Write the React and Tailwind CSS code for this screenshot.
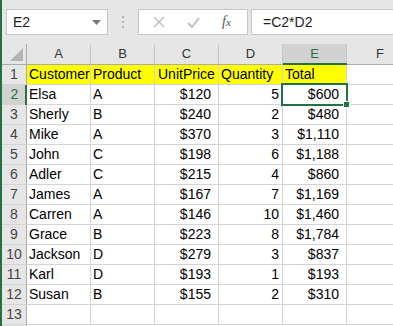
import React from "react";

const rows = [
  ["Elsa", "A", "$120", "5", "$600"],
  ["Sherly", "B", "$240", "2", "$480"],
  ["Mike", "A", "$370", "3", "$1,110"],
  ["John", "C", "$198", "6", "$1,188"],
  ["Adler", "C", "$215", "4", "$860"],
  ["James", "A", "$167", "7", "$1,169"],
  ["Carren", "A", "$146", "10", "$1,460"],
  ["Grace", "B", "$223", "8", "$1,784"],
  ["Jackson", "D", "$279", "3", "$837"],
  ["Karl", "D", "$193", "1", "$193"],
  ["Susan", "B", "$155", "2", "$310"],
];

const cols = ["A", "B", "C", "D", "E"];

function Toolbar() {
  return (
    <div className="h-[44px] flex items-start pt-[9px] pl-[4px] shrink-0">
      <div className="w-[102px] h-[26px] bg-white border border-[#c6c6c6] flex items-center justify-between pl-[6px] pr-[6px]">
        <span className="text-[14px] text-[#222]">E2</span>
        <svg width="9" height="5" viewBox="0 0 9 5">
          <path d="M0 0 H9 L4.5 5 Z" fill="#7a7a7a" />
        </svg>
      </div>
      <div className="w-[30px] h-[26px] flex flex-col items-center justify-center gap-[3px]">
        <div className="w-[2px] h-[2px] bg-[#b3b3b3]" />
        <div className="w-[2px] h-[2px] bg-[#b3b3b3]" />
        <div className="w-[2px] h-[2px] bg-[#b3b3b3]" />
      </div>
      <div className="w-[110px] h-[26px] bg-white border border-[#c6c6c6] flex items-center">
        <svg width="12" height="12" viewBox="0 0 12 12" className="ml-[14px]">
          <path d="M1 1 L11 11 M11 1 L1 11" stroke="#bdbdbd" strokeWidth="1.4" />
        </svg>
        <svg width="13" height="11" viewBox="0 0 13 11" className="ml-[22px]">
          <path d="M1 6 L5 10 L12 1" stroke="#bdbdbd" strokeWidth="1.8" fill="none" />
        </svg>
        <span
          className="ml-[22px] text-[14px] italic text-[#555] leading-none"
          style={{ fontFamily: '"Liberation Serif", serif' }}
        >
          f<span className="text-[11px]">x</span>
        </span>
      </div>
      <div className="ml-[3px] flex-1 h-[26px] bg-white border-y border-l border-[#c6c6c6] flex items-center pl-[11px]">
        <span className="text-[14px] text-[#222]">=C2*D2</span>
      </div>
    </div>
  );
}

function HeaderRow() {
  return (
    <div className="h-[21px] flex border-b border-[#ababab] shrink-0">
      <div className="w-[25px] border-r border-[#ababab] flex items-end justify-end pr-[3px] pb-[3px]">
        <svg width="13" height="13" viewBox="0 0 13 13">
          <path d="M13 0 V13 H0 Z" fill="#b4b4b4" />
        </svg>
      </div>
      {cols.map((c) =>
        c === "E" ? (
          <div
            key={c}
            className="w-[64px] bg-[#d2d2d2] border-r border-[#c6c6c6] flex items-center justify-center text-[13px] text-[#217346] relative"
          >
            {c}
            <div className="absolute left-0 right-[-1px] bottom-[-1px] h-[2px] bg-[#217346]" />
          </div>
        ) : (
          <div
            key={c}
            className="w-[64px] border-r border-[#c6c6c6] flex items-center justify-center text-[13px] text-[#333]"
          >
            {c}
          </div>
        )
      )}
      <div className="flex-1 flex items-center pl-[29px] text-[13px] text-[#333]">F</div>
    </div>
  );
}

function Cell({ children, right, pr, yellow, className = "" }) {
  return (
    <div
      className={`w-[64px] border-r border-[#d4d4d4] flex items-end pb-[1px] text-[14px] leading-[18px] text-black whitespace-nowrap overflow-visible ${
        right ? "justify-end" : "justify-start pl-[2px]"
      } ${pr || ""} ${yellow ? "bg-[#ffff00]" : "bg-white"} ${className}`}
    >
      {children}
    </div>
  );
}

function RowHead({ n, active }) {
  return active ? (
    <div className="w-[25px] bg-[#d2d2d2] flex items-center justify-center text-[14px] text-[#217346] relative">
      {n}
      <div className="absolute right-0 top-0 bottom-[-1px] w-[2px] bg-[#217346]" />
    </div>
  ) : (
    <div className="w-[25px] border-r border-[#ababab] flex items-center justify-center text-[14px] text-[#444]">
      {n}
    </div>
  );
}

export default function App() {
  return (
    <div
      className="w-[393px] h-[326px] overflow-hidden flex bg-[#e6e6e6]"
      style={{ fontFamily: '"Liberation Sans", Arial, sans-serif' }}
    >
      <div className="w-[2px] h-full bg-[#217346] shrink-0" />
      <div className="flex-1 flex flex-col min-w-0">
        <Toolbar />
        <HeaderRow />
        <div className="flex h-[20px] border-b border-[#d4d4d4]">
          <RowHead n={1} />
          <Cell yellow>Customer</Cell>
          <Cell yellow>Product</Cell>
          <Cell yellow className="pl-[3px]">UnitPrice</Cell>
          <Cell yellow>Quantity</Cell>
          <Cell yellow>Total</Cell>
          <div className="flex-1 bg-white" />
        </div>
        {rows.map((r, i) => (
          <div key={i} className="flex h-[20px] border-b border-[#d4d4d4]">
            <RowHead n={i + 2} active={i === 0} />
            <Cell>{r[0]}</Cell>
            <Cell>{r[1]}</Cell>
            <Cell right pr="pr-[7px]">{r[2]}</Cell>
            <Cell right pr="pr-[3px]">{r[3]}</Cell>
            {i === 0 ? (
              <div className="w-[64px] border-r border-[#d4d4d4] flex items-end justify-end pb-[1px] pr-[7px] text-[14px] leading-[18px] text-black bg-white relative">
                {r[4]}
                <div className="absolute left-[-2px] top-[-2px] right-[-2px] bottom-[-2px] border-2 border-[#217346]" />
                <div className="absolute right-[-4px] bottom-[-4px] w-[5px] h-[5px] bg-[#217346] border border-white box-content" />
              </div>
            ) : (
              <Cell right pr="pr-[7px]">{r[4]}</Cell>
            )}
            <div className="flex-1 bg-white" />
          </div>
        ))}
        <div className="flex h-[20px] border-b border-[#d4d4d4]">
          <RowHead n={13} />
          <Cell />
          <Cell />
          <Cell />
          <Cell />
          <Cell />
          <div className="flex-1 bg-white" />
        </div>
        <div className="flex flex-1">
          <div className="w-[25px] border-r border-[#ababab]" />
          <div className="flex-1 bg-white" />
        </div>
      </div>
    </div>
  );
}
